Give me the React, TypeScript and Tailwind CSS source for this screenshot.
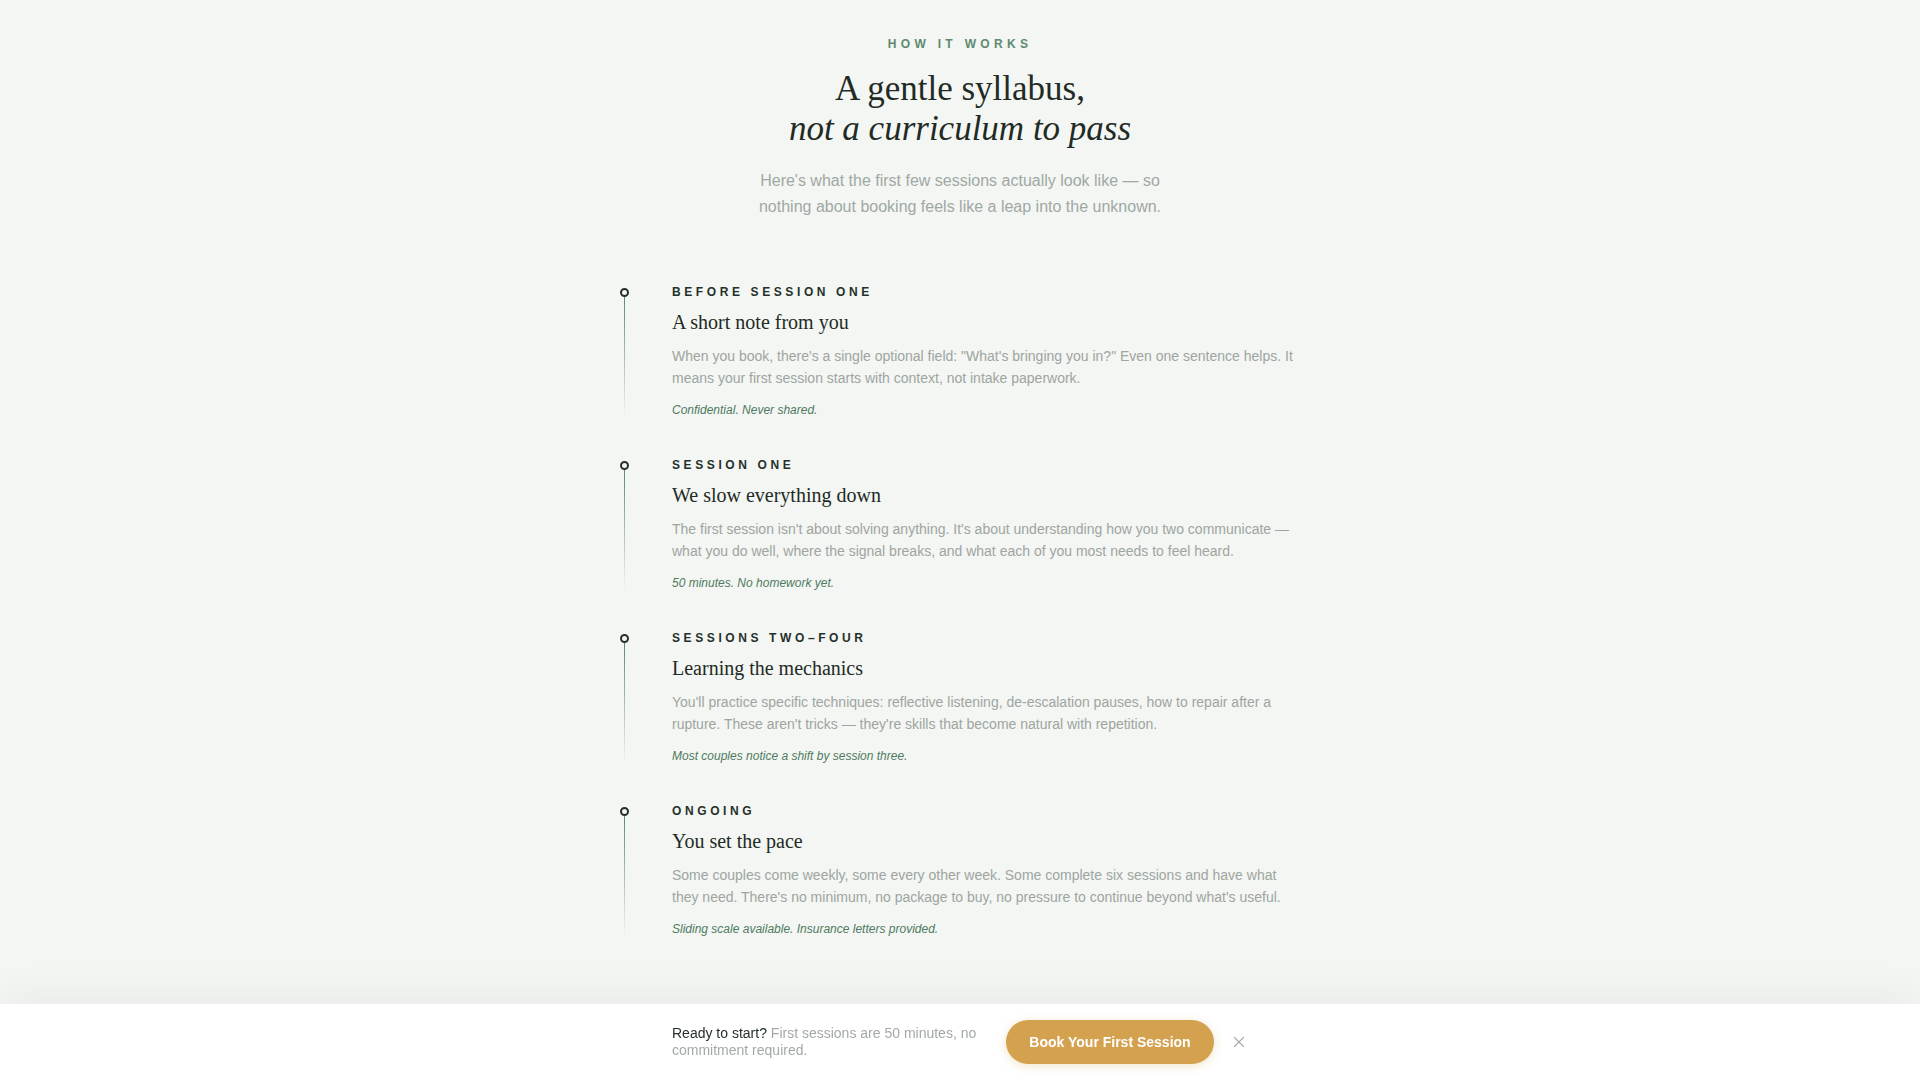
import { X } from 'lucide-react'

const steps = [
  {
    label: 'Before Session One',
    title: 'A short note from you',
    body: 'When you book, there\'s a single optional field: "What\'s bringing you in?" Even one sentence helps. It means your first session starts with context, not intake paperwork.',
    note: 'Confidential. Never shared.',
  },
  {
    label: 'Session One',
    title: 'We slow everything down',
    body: "The first session isn't about solving anything. It's about understanding how you two communicate — what you do well, where the signal breaks, and what each of you most needs to feel heard.",
    note: '50 minutes. No homework yet.',
  },
  {
    label: 'Sessions Two–Four',
    title: 'Learning the mechanics',
    body: "You'll practice specific techniques: reflective listening, de-escalation pauses, how to repair after a rupture. These aren't tricks — they're skills that become natural with repetition.",
    note: 'Most couples notice a shift by session three.',
  },
  {
    label: 'Ongoing',
    title: 'You set the pace',
    body: "Some couples come weekly, some every other week. Some complete six sessions and have what they need. There's no minimum, no package to buy, no pressure to continue beyond what's useful.",
    note: 'Sliding scale available. Insurance letters provided.',
  },
]

export default function App() {
  return (
    <div className="min-h-screen bg-[#f3f6f3] font-['Liberation_Sans',Arial,sans-serif] pb-40">
      <section className="pt-[36px] flex flex-col items-center">
        <p className="text-[12px] leading-4 font-bold uppercase tracking-[0.36em] text-[#5f8a70]">How it works</p>
        <h2 className="mt-[17px] text-center font-['Liberation_Serif','Times_New_Roman',serif] text-[35px] leading-[40px] text-[#1f2b24]">
          A gentle syllabus,
          <br />
          <em>not a curriculum to pass</em>
        </h2>
        <p className="mt-[19px] w-[420px] text-center text-[16px] leading-[26px] text-[#a0a8a4]">
          Here's what the first few sessions actually look like — so nothing about booking feels like a leap into the unknown.
        </p>

        {/* timeline */}
        <div className="mt-[64px] w-[680px] flex flex-col">
          {steps.map((s) => (
            <div key={s.label} className="flex pb-[39px]">
              <div className="w-[52px] shrink-0 flex flex-col pt-1">
                <div className="w-[9px] h-[9px] rounded-full border-2 border-[#26302a] bg-[#f3f6f3]" />
                <div className="ml-[4px] w-px flex-1 bg-gradient-to-b from-[#5f8a70] to-transparent" />
              </div>
              <div className="flex-1">
                <p className="text-[12px] leading-4 font-bold uppercase tracking-[0.3em] text-[#26302a]">{s.label}</p>
                <h3 className="mt-2 font-['Liberation_Serif','Times_New_Roman',serif] text-[20px] leading-7 text-[#1f2b24]">{s.title}</h3>
                <p className="mt-[9px] text-[14px] leading-[22px] text-[#9ea5a1]">{s.body}</p>
                <p className="mt-[13px] text-[12px] leading-4 italic text-[#4f7a5f]">{s.note}</p>
              </div>
            </div>
          ))}
        </div>
      </section>

      {/* sticky booking bar */}
      <div className="fixed bottom-0 inset-x-0 h-[76px] bg-white shadow-[0_-12px_40px_rgba(0,0,0,0.045)] flex items-center justify-center gap-6">
        <div className="w-[310px] text-[14px] leading-[17px] text-[#a3aaa6]">
          <span className="text-[#26302a]">Ready to start?</span> First sessions are 50 minutes, no commitment required.
        </div>
        <div className="flex items-center gap-4">
          <button className="h-11 w-[208px] rounded-full bg-[#d4a24f] text-white text-[14px] font-bold shadow-[0_2px_10px_rgba(212,162,79,0.3)]">
            Book Your First Session
          </button>
          <X size={18} strokeWidth={1.5} className="text-[#a3aaa6]" />
        </div>
      </div>
    </div>
  )
}
